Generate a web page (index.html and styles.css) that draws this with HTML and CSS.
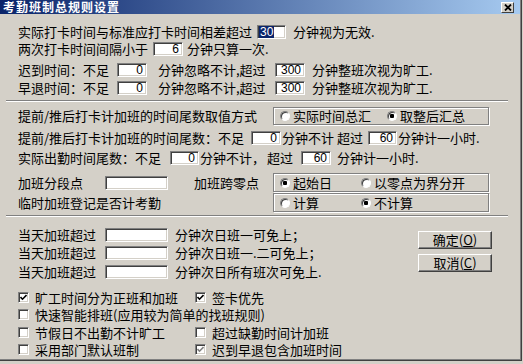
FILE: index.html
```html
<!DOCTYPE html>
<html lang="zh-CN">

<head>
  <meta charset="UTF-8">
  <title>考勤班制总规则设置</title>
  <link rel="stylesheet" href="styles.css">
</head>

<body>

  <div class="window">

    <div class="titlebar">
      <span class="title">考勤班制总规则设置</span>
      <span class="close">
        <svg width="8" height="7" viewBox="0 0 8 7"><path d="M1 0.5 L7 6.5 M7 0.5 L1 6.5" stroke="#000" stroke-width="1.8" fill="none"/></svg>
      </span>
    </div>

    <!-- 打卡时间 -->
    <section class="sec1">
      <div class="row">
        <span class="w239">实际打卡时间与标准应打卡时间相差超过</span>
        <span class="field left w29"><span class="hl">30</span></span>
        <span class="ml7">分钟视为无效.</span>
      </div>
      <div class="row short">
        <span class="w135">两次打卡时间间隔小于</span>
        <span class="field w30">6</span>
        <span class="ml4">分钟只算一次.</span>
      </div>
      <div class="row mt4">
        <span class="w99">迟到时间：不足</span>
        <span class="field w30">0</span>
        <span class="ml11 w117">分钟忽略不计,超过</span>
        <span class="field w30">300</span>
        <span class="ml7">分钟整班次视为旷工.</span>
      </div>
      <div class="row">
        <span class="w99">早退时间：不足</span>
        <span class="field w30">0</span>
        <span class="ml11 w117">分钟忽略不计,超过</span>
        <span class="field w30">300</span>
        <span class="ml7">分钟整班次视为旷工.</span>
      </div>
    </section>

    <div class="sep"></div>

    <!-- 加班尾数 -->
    <section class="sec2">
      <div class="row r5">
        <span class="w255">提前/推后打卡计加班的时间尾数取值方式</span>
        <div class="group">
          <span class="opt wide"><span class="radio"></span>实际时间总汇</span>
          <span class="opt"><span class="radio on"></span>取整后汇总</span>
        </div>
      </div>
      <div class="row r6">
        <span class="w233">提前/推后打卡计加班的时间尾数：不足</span>
        <span class="field w30">0</span>
        <span class="w87 pl1">分钟不计 超过</span>
        <span class="field w29">60</span>
        <span class="ml1">分钟计一小时.</span>
      </div>
      <div class="row r7">
        <span class="w152">实际出勤时间尾数：不足</span>
        <span class="field w29">0</span>
        <span class="w67 pl1">分钟不计，</span>
        <span class="w35 pl1">超过</span>
        <span class="field w30">60</span>
        <span class="ml6">分钟计一小时.</span>
      </div>
      <div class="row r8">
        <span class="w87">加班分段点</span>
        <span class="field w63"></span>
        <span class="ml26 w79">加班跨零点</span>
        <div class="group tall">
          <span class="opt mid"><span class="radio on"></span>起始日</span>
          <span class="opt"><span class="radio"></span>以零点为界分开</span>
        </div>
      </div>
      <div class="row r9">
        <span class="w255">临时加班登记是否计考勤</span>
        <div class="group tall">
          <span class="opt mid"><span class="radio"></span>计算</span>
          <span class="opt"><span class="radio on"></span>不计算</span>
        </div>
      </div>
    </section>

    <div class="sep"></div>

    <!-- 次日免上 -->
    <section class="sec3">
      <div class="rest">
        <div class="row">
          <span class="w87">当天加班超过</span>
          <span class="field w63"></span>
          <span class="ml7">分钟次日班一可免上；</span>
        </div>
        <div class="row">
          <span class="w87">当天加班超过</span>
          <span class="field w63"></span>
          <span class="ml7">分钟次日班一.二可免上；</span>
        </div>
        <div class="row mt1">
          <span class="w87">当天加班超过</span>
          <span class="field w63"></span>
          <span class="ml7">分钟次日所有班次可免上.</span>
        </div>
      </div>
      <div class="buttons">
        <span class="btn">确定(<u>O</u>)</span>
        <span class="btn">取消(<u>C</u>)</span>
      </div>
    </section>

    <section class="checks">
      <span class="ck"><span class="check"><svg width="7" height="7" viewBox="0 0 7 7"><path d="M0.5 3 L2.5 5.2 L6.5 1" stroke="#000" stroke-width="1.6" fill="none"/></svg></span>旷工时间分为正班和加班</span>
      <span class="ck"><span class="check"><svg width="7" height="7" viewBox="0 0 7 7"><path d="M0.5 3 L2.5 5.2 L6.5 1" stroke="#000" stroke-width="1.6" fill="none"/></svg></span>签卡优先</span>
      <span class="ck span"><span class="check"></span>快速智能排班(应用较为简单的找班规则)</span>
      <span class="ck"><span class="check"></span>节假日不出勤不计旷工</span>
      <span class="ck"><span class="check"></span>超过缺勤时间计加班</span>
      <span class="ck"><span class="check"></span>采用部门默认班制</span>
      <span class="ck"><span class="check"><svg width="7" height="7" viewBox="0 0 7 7"><path d="M0.5 3 L2.5 5.2 L6.5 1" stroke="#808080" stroke-width="1.6" fill="none"/></svg></span>迟到早退包含加班时间</span>
    </section>

  </div>

</body>

</html>
```

FILE: styles.css
```css
body {
  margin: 0;
  background: #d4d0c8;
  font-family: "Noto Sans CJK SC", sans-serif;
  font-size: 13px;
  color: #000;
}

.window {
  display: flex;
  flex-direction: column;
  box-sizing: border-box;
  width: 522px;
  height: 361px;
  background: #d4d0c8;
  border-right: 1px solid #404040;
  border-bottom: 1px solid #404040;
  box-shadow: inset -1px -1px #808080;
}

.titlebar {
  display: flex;
  align-items: center;
  justify-content: space-between;
  height: 14px;
  margin-right: 1px;
  padding: 0 6px 0 3px;
  background: linear-gradient(to right, #0a246a, #a6caf0);
}

.title {
  color: #fff;
  font-weight: bold;
  font-size: 12px;
  line-height: 14px;
  letter-spacing: 1px;
}

.close {
  display: flex;
  align-items: center;
  justify-content: center;
  box-sizing: border-box;
  width: 13px;
  height: 11px;
  background: #d4d0c8;
  border: 1px solid;
  border-color: #fff #404040 #404040 #fff;
}

.row {
  display: flex;
  align-items: center;
  height: 18px;
  padding-left: 18px;
  white-space: nowrap;
  line-height: 18px;
}

.row span {
  flex: none;
}

.sec1 {
  padding-top: 9px;
}

.row.short {
  height: 16px;
  line-height: 16px;
}

.sep {
  margin: 3px 13px 0 6px;
  border-top: 1px solid #808080;
  border-bottom: 1px solid #fff;
}

.r5 { margin-top: 5px; }
.r6 { margin-top: 4px; }
.r7 { margin-top: 2px; }
.r8 { margin-top: 6px; height: 19px; }
.r9 { margin-top: 1px; height: 19px; }

.mt1 { margin-top: 1px; }
.mt4 { margin-top: 4px; }
.ml1 { margin-left: 1px; }
.ml4 { margin-left: 4px; }
.ml6 { margin-left: 6px; }
.ml7 { margin-left: 7px; }
.ml11 { margin-left: 11px; }
.ml26 { margin-left: 26px; }
.pl1 { padding-left: 1px; box-sizing: border-box; }

.w29 { width: 29px; }
.w30 { width: 30px; }
.w35 { width: 35px; }
.w63 { width: 63px; }
.w67 { width: 67px; }
.w79 { width: 79px; }
.w87 { width: 87px; }
.w99 { width: 99px; }
.w117 { width: 117px; }
.w135 { width: 135px; }
.w152 { width: 152px; }
.w233 { width: 233px; }
.w239 { width: 239px; }
.w255 { width: 255px; }

.field {
  display: inline-block;
  box-sizing: border-box;
  height: 14px;
  padding-right: 3px;
  background: #fff;
  border: 1px solid;
  border-color: #808080 #fff #fff #808080;
  box-shadow: inset 1px 1px #404040, inset -1px -1px #d4d0c8;
  font-family: "Liberation Sans", Arial, sans-serif;
  font-size: 12px;
  line-height: 12px;
  text-align: right;
}

.field.left {
  padding: 0 0 0 1px;
  text-align: left;
}

.hl {
  display: inline-block;
  padding: 0 1px;
  background: #0a246a;
  color: #fff;
}

.group {
  display: flex;
  align-items: center;
  box-sizing: border-box;
  width: 216px;
  height: 18px;
  padding-left: 6px;
  border: 1px solid #808080;
  box-shadow: inset 1px 1px #fff, 1px 1px #fff;
}

.group.tall {
  height: 19px;
}

.opt {
  display: flex;
  align-items: center;
  gap: 3px;
}

.opt.wide { width: 107px; }
.opt.mid { width: 81px; }

.radio {
  box-sizing: border-box;
  width: 10px;
  height: 10px;
  border-radius: 50%;
  background: #fff;
  border: 1px solid;
  border-color: #808080 #fff #fff #808080;
  box-shadow: inset 1px 1px #404040;
}

.radio.on {
  background: radial-gradient(circle, #000 0 2px, #fff 2.5px);
}

.sec3 {
  display: grid;
  grid-template-columns: 418px 74px;
}

.rest {
  padding-top: 9px;
}

.buttons {
  display: flex;
  flex-direction: column;
  gap: 5px;
  padding-top: 14px;
}

.btn {
  display: flex;
  align-items: center;
  justify-content: center;
  box-sizing: border-box;
  height: 18px;
  border: 1px solid;
  border-color: #fff #404040 #404040 #fff;
  box-shadow: inset -1px -1px #808080;
  line-height: 16px;
}

.checks {
  display: grid;
  grid-template-columns: 177px auto;
  grid-template-rows: 18px 17px 18px 17px;
  margin-top: 7px;
  padding-left: 18px;
  white-space: nowrap;
}

.checks .span {
  grid-column: 1 / -1;
}

.ck {
  display: flex;
  align-items: center;
  gap: 6px;
}

.check {
  display: flex;
  align-items: center;
  justify-content: center;
  box-sizing: border-box;
  width: 11px;
  height: 11px;
  background: #fff;
  border: 1px solid;
  border-color: #808080 #fff #fff #808080;
  box-shadow: inset 1px 1px #404040, inset -1px -1px #d4d0c8;
}
```
